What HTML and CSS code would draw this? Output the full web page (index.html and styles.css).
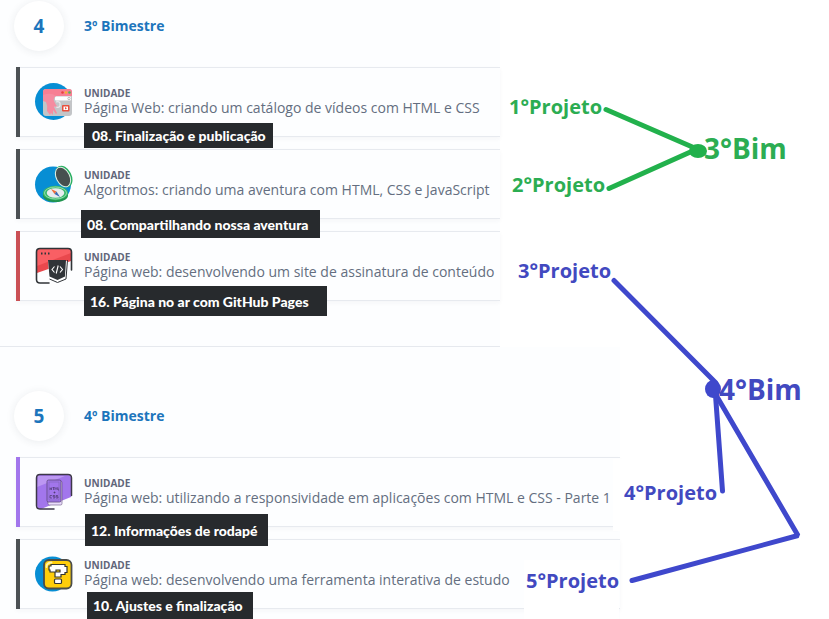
FILE: index.html
```html
<!DOCTYPE html>
<html lang="pt-BR">
<head>
<meta charset="utf-8">
<meta name="viewport" content="width=device-width, initial-scale=1">
<title>Bimestres</title>
<link rel="stylesheet" href="styles.css">
</head>
<body>
<main class="board">
  <section class="term term-third">
    <header class="term-header">
      <span class="term-number">4</span>
      <h2 class="term-title">3º Bimestre</h2>
    </header>
    <ul class="units">
      <li class="unit">
        <svg class="unit-icon" viewBox="0 0 40 40" aria-hidden="true">
          <circle cx="19.500" cy="19.500" r="18.500" fill="#078ed4"/>
          <rect x="9" y="7" width="29" height="27" rx="3" fill="#c3c5c8"/>
          <path d="M9 14v-4q0-3 3-3h23q3 0 3 3v4z" fill="#f77f93"/>
          <circle cx="28.500" cy="10.500" r="1.300" fill="#e8433f"/><circle cx="32" cy="10.500" r="1.300" fill="#f5b52e"/><circle cx="35.500" cy="10.500" r="1.300" fill="#4eb45b"/>
          <rect x="21" y="14.500" width="16" height="4" rx="1" fill="#fff"/>
          <circle cx="35" cy="16.500" r="1.200" fill="none" stroke="#999" stroke-width=".6"/>
          <path d="M9 13q8-3 13 1-3 2-2 5l2 4q2 1 1 3l-2-2-1 1 3 6-1 1-3-4v5l-2-2-1 2-3-4q1-5-1-9l-3-1z" fill="#f58ca0"/>
          <path d="M22 20q3-1 4 1v3q-1 2-4 1" fill="none" stroke="#e9eaec" stroke-width="1.200"/>
          <rect x="28" y="23" width="7.500" height="6.500" rx="1" fill="#e94f3c"/><rect x="29.500" y="24.500" width="4.500" height="3.500" fill="#fff"/><path d="M31 25l2 1.300-2 1.200z" fill="#e94f3c"/>
        </svg>
        <div class="unit-text">
          <span class="unit-kind">UNIDADE</span>
          <h3 class="unit-name">Página Web: criando um catálogo de vídeos com HTML e CSS</h3>
        </div>
        <span class="lesson lesson-publish">08. Finalização e publicação</span>
      </li>
      <li class="unit">
        <svg class="unit-icon" viewBox="0 0 40 40" aria-hidden="true">
          <circle cx="19" cy="20.500" r="18" fill="#078ed4"/>
          <ellipse cx="30" cy="12.500" rx="7.500" ry="11.500" transform="rotate(-27 30 12.500)" fill="#27ae60"/>
          <ellipse cx="29" cy="13" rx="7.200" ry="11" transform="rotate(-27 29 13)" fill="#dff1e5"/>
          <ellipse cx="29" cy="13" rx="6.200" ry="10" transform="rotate(-27 29 13)" fill="#46504f"/>
          <path d="M9 29v3c2 8 23 8 25 0v-3z" fill="#20944f"/>
          <ellipse cx="21.500" cy="29" rx="12.500" ry="7.200" fill="#36b769"/>
          <ellipse cx="21.500" cy="29" rx="11" ry="6" fill="none" stroke="#a9e4bd" stroke-width=".8"/>
          <ellipse cx="21.500" cy="29" rx="8.800" ry="4.800" fill="#e8ecef"/>
          <path d="M17 25l5.500 2.500-2 2.500z" fill="#ef6d3b"/><path d="M26 33l-5.500-3 2-2.500z" fill="#3b6bb5"/>
        </svg>
        <div class="unit-text">
          <span class="unit-kind">UNIDADE</span>
          <h3 class="unit-name">Algoritmos: criando uma aventura com HTML, CSS e JavaScript</h3>
        </div>
        <span class="lesson lesson-adventure">08. Compartilhando nossa aventura</span>
      </li>
      <li class="unit unit-red">
        <svg class="unit-icon" viewBox="0 0 40 40" aria-hidden="true">
          <path d="M3 4q0-1 1-1h32q1 0 1 1v11L3 27z" fill="#e9484d"/>
          <path d="M3 3h34v4L3 20z" fill="#f95f64"/>
          <path d="M15 37H6q-3.500 0-3.500-3.500V6Q2.500 2.500 6 2.500h28q3.500 0 3.500 3.500v18" fill="none" stroke="#303438" stroke-width="1.600" stroke-linecap="round"/>
          <path d="M7 7.500h1.500M10.500 7.500H12M14 7.500h1.500" stroke="#303438" stroke-width="1.800"/>
          <path d="M14 15h20l-1.500 17-9 4-8-4z" fill="#fff"/>
          <path d="M14 14h18l-1 16.500-7.500 3.500-8-3.500z" fill="#303438"/>
          <path d="M15.500 33l8 3.500 8.500-3.500 1.500-19" fill="none" stroke="#303438" stroke-width="1"/>
          <path d="M20.500 20.500l-2.500 3 2.500 3M26 20.500l2.500 3-2.500 3M24.200 19.500l-2 8" fill="none" stroke="#fff" stroke-width="1.100"/>
        </svg>
        <div class="unit-text">
          <span class="unit-kind">UNIDADE</span>
          <h3 class="unit-name">Página web: desenvolvendo um site de assinatura de conteúdo</h3>
        </div>
        <span class="lesson lesson-github">16. Página no ar com GitHub Pages</span>
      </li>
    </ul>
  </section>

  <section class="term term-fourth">
    <header class="term-header">
      <span class="term-number">5</span>
      <h2 class="term-title">4º Bimestre</h2>
    </header>
    <ul class="units">
      <li class="unit unit-purple">
        <svg class="unit-icon" viewBox="0 0 40 40" aria-hidden="true">
          <path d="M3 6q0-3 3-3h28q3 0 3 3v19L7 37q-4 0-4-4z" fill="#a276ec"/>
          <path d="M4 4h27L3 15z" fill="#bc97f2"/>
          <path d="M20 37H6q-3.500 0-3.500-3.500V6Q2.500 2.500 6 2.500h28q3.500 0 3.500 3.500v17.500" fill="none" stroke="#3d3749" stroke-width="1.500" stroke-linecap="round"/>
          <rect x="14" y="9" width="14" height="24" rx="1.500" fill="#e9dcfb" stroke="#66537e" stroke-width=".6"/>
          <rect x="13" y="8" width="14" height="22" rx="1.500" fill="#a276ec" stroke="#5a487a" stroke-width=".8"/>
          <rect x="15" y="10" width="10" height="18" fill="none" stroke="#7a60a8" stroke-width=".5"/>
          <path d="M16 15.500v2.500m0-1.200h1.500m0-1.300v2.500m1-2.500h2m-1 0v2.500m1.500 0v-2.500l1 1 1-1v2.500m1-2.500v2.500h1M19.500 20.500h2m-1-1v2M18 23.500h-2v2.500h2m3-2.500h-2v1.200h2V26h-2m5-2.500h-2v1.200h2V26h-2" fill="none" stroke="#433460" stroke-width=".6"/>
        </svg>
        <div class="unit-text">
          <span class="unit-kind">UNIDADE</span>
          <h3 class="unit-name">Página web: utilizando a responsividade em aplicações com HTML e CSS - Parte 1</h3>
        </div>
        <span class="lesson lesson-footer">12. Informações de rodapé</span>
      </li>
      <li class="unit">
        <svg class="unit-icon" viewBox="0 0 40 40" aria-hidden="true">
          <circle cx="18.500" cy="20" r="17.500" fill="#078ed4"/>
          <rect x="10" y="6" width="27.500" height="28.500" rx="5" fill="#ffce0a" stroke="#4b4d49" stroke-width="1.800"/>
          <path d="M12.500 13q0-4.500 5-4.500" fill="none" stroke="#fff2a8" stroke-width="2" stroke-linecap="round"/>
          <path d="M17 10.500h14v2h2v6h-2v2h-4v2.500h-6v-5h5v-2h-4v2h-6v-2h-1v-4h2z" fill="#fff" stroke="#343530" stroke-width="1.200"/>
          <rect x="20.500" y="25" width="7" height="4.500" rx="1" fill="#fff" stroke="#343530" stroke-width="1.200"/>
        </svg>
        <div class="unit-text">
          <span class="unit-kind">UNIDADE</span>
          <h3 class="unit-name">Página web: desenvolvendo uma ferramenta interativa de estudo</h3>
        </div>
        <span class="lesson lesson-adjust">10. Ajustes e finalização</span>
      </li>
    </ul>
  </section>

  <div class="diagram">
    <span class="node project project-four blue">4°Projeto</span>
    <span class="node project project-five blue">5°Projeto</span>
    <svg class="links" width="829" height="619" viewBox="0 0 829 619" aria-hidden="true">
      <g fill="none" stroke="#22b14c" stroke-width="5" stroke-linecap="round">
        <path d="M606 109.500L697 149L609 188.500"/>
      </g>
      <ellipse cx="698" cy="151" rx="9" ry="7" fill="#22b14c"/>
      <g fill="none" stroke="#3f48cc" stroke-width="5" stroke-linecap="round" stroke-linejoin="bevel">
        <path d="M614 280.500L716 383V395L798 535.500L632 580.500"/>
        <path d="M715.500 395L722.500 491"/>
      </g>
      <ellipse cx="713" cy="389" rx="8" ry="9" fill="#3f48cc"/>
    </svg>
    <span class="node project project-one green">1°Projeto</span>
    <span class="node project project-two green">2°Projeto</span>
    <span class="node project project-three blue">3°Projeto</span>
    <span class="node bim bim-three green">3°Bim</span>
    <span class="node bim bim-four blue">4°Bim</span>
  </div>
</main>
</body>
</html>
```
FILE: styles.css
```css
* {
  box-sizing: border-box;
}

body {
  margin: 0;
  background: #fff;
  font-family: "Open Sans", "Noto Sans", sans-serif;
  overflow: hidden;
}

h2,
h3,
ul {
  margin: 0;
  padding: 0;
}

.board {
  position: relative;
}

.term {
  background: #fdfeff;
}

.term-third {
  max-width: 500px;
  padding: 1px 0 45px;
  border-bottom: 1px solid #e6e9ee;
}

.term-fourth {
  max-width: 620px;
  padding: 44px 0 10px;
}

.term-header {
  display: flex;
  align-items: center;
  gap: 20px;
  padding-left: 14px;
}

.term-number {
  display: grid;
  place-items: center;
  width: 50px;
  height: 50px;
  border-radius: 50%;
  background: #fff;
  box-shadow: 0 1px 8px rgba(40, 50, 70, 0.09);
  color: #1c75bc;
  font-size: 19px;
  font-weight: 700;
}

.term-title {
  color: #1c75bc;
  font-size: 14px;
  line-height: 20px;
}

.units {
  display: grid;
  gap: 12px;
  margin-top: 16px;
  padding-left: 16px;
  list-style: none;
}

.unit {
  position: relative;
  display: flex;
  align-items: center;
  gap: 10px;
  height: 70px;
  padding-left: 18px;
  border: solid #e7eaef;
  border-width: 1px 0;
  background: #fdfeff;
  box-shadow: 0 2px 4px rgba(40, 50, 70, 0.04);
}

/* Coloured bar down the full height of the card. */
.unit::before {
  content: "";
  position: absolute;
  left: 0;
  top: -1px;
  bottom: -1px;
  width: 4px;
  background: #4c5154;
}

.unit-red::before {
  background: #ca5055;
}

.unit-purple::before {
  background: #a276ec;
}

.unit-icon {
  flex: none;
  width: 40px;
  height: 40px;
}

.unit-text {
  display: grid;
  white-space: nowrap;
}

.unit-kind {
  color: #62667a;
  font-size: 10px;
  font-weight: 700;
  line-height: 12px;
}

.unit-name {
  color: #646e80;
  font-size: 14px;
  font-weight: 400;
  line-height: 18px;
}

/* Lesson tags overlap the bottom edge of their card. */
.lesson {
  position: absolute;
  z-index: 1;
  display: flex;
  align-items: center;
  padding-left: 6px;
  background: #272a2d;
  color: #fff;
  font-family: Lato, sans-serif;
  font-size: 14px;
  font-weight: 900;
  white-space: nowrap;
}

.lesson-publish {
  left: 68px;
  top: 55px;
  width: 189px;
  height: 25px;
  padding-left: 8px;
}

.lesson-adventure {
  left: 65px;
  top: 60px;
  width: 239px;
  height: 28px;
}

.lesson-github {
  left: 68px;
  top: 54px;
  width: 243px;
  height: 30px;
}

.lesson-footer {
  left: 69px;
  top: 56px;
  width: 183px;
  height: 32px;
}

.lesson-adjust {
  left: 71px;
  top: 52px;
  width: 166px;
  height: 27px;
}

.diagram,
.links {
  position: absolute;
  left: 0;
  top: 0;
}

.node {
  position: absolute;
  font-weight: 700;
  white-space: nowrap;
}

.green {
  color: #2cad52;
}

.blue {
  color: #4249c0;
}

.project {
  font-size: 20px;
  line-height: 28px;
}

.bim {
  font-size: 28px;
  line-height: 40px;
}

.project-one {
  left: 509px;
  top: 93px;
}

.project-two {
  left: 512px;
  top: 171px;
}

.project-three {
  left: 518px;
  top: 257px;
}

.project-four {
  left: 613px;
  top: 459px;
  padding: 20px 0 24px 11px;
  background: #fff;
}

.project-five {
  left: 524px;
  top: 560px;
  padding: 7px 0 24px 2px;
  background: #fff;
}

.bim-three {
  left: 704px;
  top: 128px;
}

.bim-four {
  left: 719px;
  top: 369px;
}
```
